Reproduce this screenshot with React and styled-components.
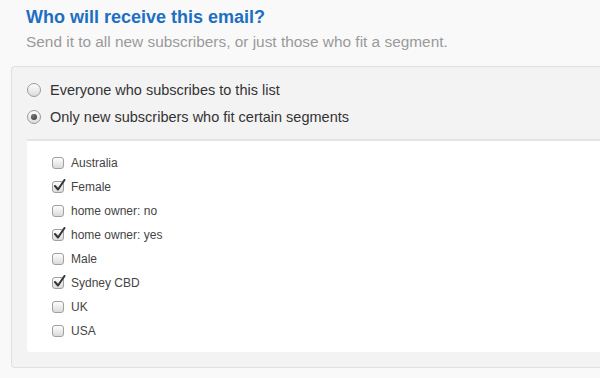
import React from "react";
import styled, { createGlobalStyle } from "styled-components";

const Global = createGlobalStyle`
  html, body { margin: 0; padding: 0; background: #f9f9f9; overflow: hidden; }
  body { font-family: "Liberation Sans", Arial, Helvetica, sans-serif; }
`;

const Page = styled.div`
  width: 600px;
  height: 378px;
  overflow: hidden;
`;

const Header = styled.div`
  padding: 6px 0 0 26px;
`;

const Title = styled.h2`
  margin: 0;
  font-size: 18px;
  line-height: 22px;
  font-weight: bold;
  color: #1d6fc2;
`;

const Subtitle = styled.p`
  margin: 5px 0 0;
  font-size: 15.4px;
  line-height: 18px;
  color: #9a9a9a;
`;

const Panel = styled.div`
  margin: 15px -20px 0 11px;
  background: #f3f3f3;
  border: 1px solid #e0e0e0;
  border-right: none;
  border-radius: 4px 0 0 4px;
  padding: 10px 0 15px 15px;
`;

const RadioRow = styled.label`
  display: flex;
  align-items: center;
  height: 26px;
  margin-bottom: 1px;
  font-size: 14.5px;
  color: #333;
  gap: 9px;
`;

const Radio = styled.span`
  box-sizing: border-box;
  width: 14px;
  height: 14px;
  border-radius: 50%;
  border: 1px solid #9a9a9a;
  background: linear-gradient(#fdfdfd, #dcdcdc);
  display: flex;
  align-items: center;
  justify-content: center;
  &::after {
    content: "";
    display: ${(p) => (p.$on ? "block" : "none")};
    width: 6px;
    height: 6px;
    border-radius: 50%;
    background: radial-gradient(circle at 40% 35%, #777, #333);
  }
`;

const SegmentBox = styled.div`
  margin-top: 9px;
  background: #fff;
  border-top: 2px solid #e4e4e4;
  border-radius: 0 0 0 3px;
  padding: 10px 0 9px 25px;
`;

const CheckRow = styled.label`
  display: flex;
  align-items: center;
  height: 24px;
  gap: 7px;
  font-size: 12px;
  color: #444;
`;

const Box = styled.span`
  position: relative;
  box-sizing: border-box;
  width: 12px;
  height: 12px;
  border: 1px solid #a0a0a0;
  border-radius: 3px;
  background: linear-gradient(#fdfdfd, #dadada);
  svg {
    position: absolute;
    left: 0px;
    top: -3px;
  }
`;

const Check = () => (
  <svg width="13" height="13" viewBox="0 0 13 13">
    <path d="M2 7 L5 10.5 L11.5 1" fill="none" stroke="#333" strokeWidth="2" strokeLinecap="round" strokeLinejoin="round" />
  </svg>
);

const segments = [
  ["Australia", false],
  ["Female", true],
  ["home owner: no", false],
  ["home owner: yes", true],
  ["Male", false],
  ["Sydney CBD", true],
  ["UK", false],
  ["USA", false],
];

export default function App() {
  return (
    <Page>
      <Global />
      <Header>
        <Title>Who will receive this email?</Title>
        <Subtitle>Send it to all new subscribers, or just those who fit a segment.</Subtitle>
      </Header>
      <Panel>
        <RadioRow>
          <Radio />
          Everyone who subscribes to this list
        </RadioRow>
        <RadioRow>
          <Radio $on />
          Only new subscribers who fit certain segments
        </RadioRow>
        <SegmentBox>
          {segments.map(([name, on]) => (
            <CheckRow key={name}>
              <Box>{on && <Check />}</Box>
              {name}
            </CheckRow>
          ))}
        </SegmentBox>
      </Panel>
    </Page>
  );
}
